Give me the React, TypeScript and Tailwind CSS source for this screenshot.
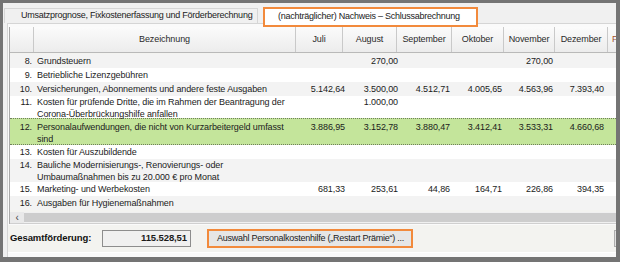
import React from 'react';

type Row = {
  nr: string;
  lines: string[];
  values?: string[];
  h: string;
  pad?: string;
  green?: boolean;
};

const rows: Row[] = [
  { nr: '8.', lines: ['Grundsteuern'], values: ['', '270,00', '', '', '270,00', ''], h: 'h-[14px]' },
  { nr: '9.', lines: ['Betriebliche Lizenzgebühren'], h: 'h-[14px]' },
  {
    nr: '10.',
    lines: ['Versicherungen, Abonnements und andere feste Ausgaben'],
    values: ['5.142,64', '3.500,00', '4.512,71', '4.005,65', '4.563,96', '7.393,40'],
    h: 'h-[14px]',
  },
  {
    nr: '11.',
    lines: ['Kosten für prüfende Dritte, die im Rahmen der Beantragung der', 'Corona-Überbrückungshilfe anfallen'],
    values: ['', '1.000,00', '', '', '', ''],
    h: 'h-[22px]',
  },
  {
    nr: '12.',
    lines: ['Personalaufwendungen, die nicht von Kurzarbeitergeld umfasst', 'sind'],
    values: ['3.886,95', '3.152,78', '3.880,47', '3.412,41', '3.533,31', '4.660,68'],
    h: 'h-[27px]',
    pad: 'pt-[2px]',
    green: true,
  },
  { nr: '13.', lines: ['Kosten für Auszubildende'], h: 'h-[14px]' },
  {
    nr: '14.',
    lines: ['Bauliche Modernisierungs-, Renovierungs- oder', 'Umbaumaßnahmen bis zu 20.000 € pro Monat'],
    h: 'h-[23px]',
  },
  {
    nr: '15.',
    lines: ['Marketing- und Werbekosten'],
    values: ['681,33', '253,61', '44,86', '164,71', '226,86', '394,35'],
    h: 'h-[14px]',
  },
  { nr: '16.', lines: ['Ausgaben für Hygienemaßnahmen'], h: 'h-[14px]' },
];

const months = ['Juli', 'August', 'September', 'Oktober', 'November', 'Dezember'];

const headCols = 'grid grid-cols-[24px_262px_47px_54px_55px_52px_51px_53px_40px]';
const dataCols = 'grid grid-cols-[24px_262px_49px_53px_52px_52px_51px_51px_40px]';

const HeadCell: React.FC<{ children?: React.ReactNode; className?: string }> = ({ children, className }) => (
  <div
    className={
      'flex items-center justify-center border-r border-[#c9c9c9] bg-gradient-to-b from-[#fbfbfb] to-[#ececec] text-[#2a2a2a] ' +
      (className ?? '')
    }
  >
    {children}
  </div>
);

const DataRow: React.FC<{ row: Row; index: number }> = ({ row, index }) => {
  const multi = row.lines.length > 1;
  const leading = multi ? 'leading-[12px]' : 'leading-[14px]';
  const bg = row.green
    ? 'bg-[#c4e59b] border-y border-dotted border-[#6f7f5c]'
    : index % 2 === 0
      ? 'bg-[#f3f3f3]'
      : 'bg-white';
  return (
    <div className={`${dataCols} ${row.h} ${bg} ${leading} ${row.pad ?? ''}`}>
      <div className="text-right pr-[2px]">{row.nr}</div>
      <div className="pl-[3px] whitespace-nowrap">
        {row.lines.map((l, i) => (
          <div key={i}>{l}</div>
        ))}
      </div>
      {months.map((m, i) => (
        <div key={m} className="text-right whitespace-nowrap">
          {row.values?.[i] ?? ''}
        </div>
      ))}
      <div />
    </div>
  );
};

export default function App() {
  return (
    <div className="w-[620px] h-[262px] overflow-hidden border-t-[3px] border-l-[3px] border-r-[4px] border-b-[5px] border-[#747474] bg-[#f0f0f0] font-['Liberation_Sans',Arial,sans-serif] text-[9px] tracking-[-0.1px] text-[#1b1b1b]">
      <div className="flex flex-col h-full">
        {/* tabs */}
        <div className="flex items-end h-[20px] shrink-0">
          <div className="ml-[1px] w-[254px] h-[15px] border border-b-0 border-[#d6d6d6] bg-[#f0f0f0] flex items-center pl-[16px] whitespace-nowrap tracking-[-0.25px] text-[#222]">
            Umsatzprognose, Fixkostenerfassung und Förderberechnung
          </div>
          <div className="relative z-10 ml-[5px] -mb-[4px] w-[215px] h-[20px] border-2 border-[#f28a3c] bg-white flex items-center pl-[13px] whitespace-nowrap tracking-[-0.25px] text-[#222]">
            (nachträglicher) Nachweis – Schlussabrechnung
          </div>
        </div>

        {/* panel */}
        <div className="ml-[4px] flex-1 border-t border-l border-[#d5d5d5] bg-[#fafafa] flex flex-col">
          <div className="ml-[1px] mt-[3px] border-l border-[#a9a9a9] bg-[#f3f3f0] overflow-hidden">
            <div className={`${headCols} h-[26px] border-b border-[#b9b9b9]`}>
              <HeadCell />
              <HeadCell>Bezeichnung</HeadCell>
              {months.map((m) => (
                <HeadCell key={m}>{m}</HeadCell>
              ))}
              <HeadCell className="justify-start pl-[4px] text-[#a0522d]">F</HeadCell>
            </div>
            <div className="pt-[1px]">
              {rows.map((r, i) => (
                <DataRow key={r.nr} row={r} index={i} />
              ))}
            </div>
            <div className="h-[2px] bg-[#f3f3f0]" />
            {/* horizontal scrollbar */}
            <div className="flex h-[12px] border-b border-[#cfcfcf] bg-[#e9e9e9]">
              <div className="w-[14px] flex items-center justify-center text-[10px] leading-none text-[#444]">‹</div>
              <div className="flex-1 bg-[#cdcdcd] border-y border-[#f0f0f0]" />
            </div>
          </div>

          {/* footer */}
          <div className="flex items-center h-[28px] mt-[1px] pl-[2px] border-b border-white bg-[#f3f3f0]">
            <span className="font-bold text-[9.5px] text-[#111] w-[89px] whitespace-nowrap">Gesamtförderung:</span>
            <div className="ml-[3px] w-[89px] h-[17px] border border-[#8d8d8d] bg-[#f0f0f0] flex items-center justify-end pr-[3px] font-bold text-[9.5px]">
              115.528,51
            </div>
            <div className="ml-[16px] w-[206px] h-[19px] border-2 border-[#f28a3c] bg-[#e6e6e6] flex items-center pl-[8px] whitespace-nowrap tracking-[-0.25px] text-[#222]">
              Auswahl Personalkostenhilfe („Restart Prämie“) ...
            </div>
            <div className="ml-auto mr-[-8px] w-[10px] h-[17px] border border-[#adadad] bg-[#e1e1e1]" />
          </div>
        </div>
      </div>
    </div>
  );
}
